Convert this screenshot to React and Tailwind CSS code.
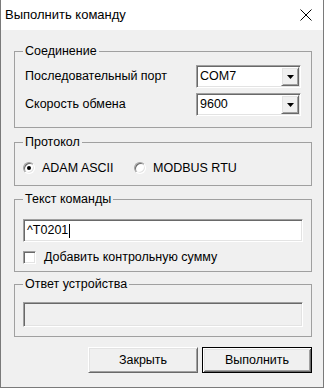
import { useState } from "react";

const sunken =
  "border border-t-[#a0a0a0] border-l-[#a0a0a0] border-r-white border-b-white shadow-[inset_1px_1px_0_#696969,inset_-1px_-1px_0_#e3e3e3]";

const raised =
  "border border-t-white border-l-white border-r-[#696969] border-b-[#696969] shadow-[inset_1px_1px_0_#e3e3e3,inset_-1px_-1px_0_#a0a0a0]";

const raisedDefault =
  "border border-black shadow-[inset_1px_1px_0_#ffffff,inset_-1px_-1px_0_#696969,inset_2px_2px_0_#e3e3e3,inset_-2px_-2px_0_#a0a0a0]";

function Group({ title, className, children }) {
  return (
    <fieldset className={`w-[298px] border border-[#a0a0a0] px-[8px] ${className}`}>
      <legend className="px-[2px] leading-[15px]">{title}</legend>
      {children}
    </fieldset>
  );
}

function Combo({ value }) {
  return (
    <div className={`flex h-[23px] w-[105px] bg-white p-[1px] ${sunken}`}>
      <div className="flex flex-1 items-center pl-[2px]">{value}</div>
      <div className={`flex w-[18px] items-center justify-center bg-[#f0f0f0] ${raised}`}>
        <svg width="7" height="4" viewBox="0 0 7 4">
          <polygon points="0,0 7,0 3.5,4" fill="#000" />
        </svg>
      </div>
    </div>
  );
}

function Radio({ checked, label, className }) {
  return (
    <div className={`flex items-center ${className}`}>
      <div className="flex h-[12px] w-[12px] items-center justify-center rounded-full border border-t-[#a0a0a0] border-l-[#a0a0a0] border-r-white border-b-white bg-white shadow-[inset_1px_1px_0_#696969,inset_-1px_-1px_0_#e3e3e3]">
        {checked && <div className="h-[4px] w-[4px] rounded-full bg-black" />}
      </div>
      <span className="ml-[7px]">{label}</span>
    </div>
  );
}

export default function App() {
  const [protocol, setProtocol] = useState("adam");

  return (
    <div className="h-[388px] w-[325px] bg-white font-['Liberation_Sans',Arial,sans-serif] text-[12.5px] text-black">
      <div className="flex h-[388px] w-[324px] flex-col border-x border-b border-[#7a7a7a]">
        {/* Title bar */}
        <div className="flex h-[30px] items-center justify-between bg-white pl-[4px] pr-[11px]">
          <span className="text-[13px]">Выполнить команду</span>
          <svg width="12" height="12" viewBox="0 0 12 12">
            <path d="M0.5 0.5 L11.5 11.5 M11.5 0.5 L0.5 11.5" stroke="#000" strokeWidth="1" />
          </svg>
        </div>

        {/* Body */}
        <div className="flex flex-1 flex-col bg-[#f0f0f0] pl-[13px] pt-[14px]">
          <Group title="Соединение" className="pb-[11px]">
            <div className="flex flex-col gap-[5px] pt-[6px]">
              <div className="flex items-center">
                <span className="w-[173px] pl-[2px]">Последовательный порт</span>
                <Combo value="COM7" />
              </div>
              <div className="flex items-center">
                <span className="w-[173px] pl-[2px]">Скорость обмена</span>
                <Combo value="9600" />
              </div>
            </div>
          </Group>

          <Group title="Протокол" className="mt-[7px] pb-[7px]">
            <div className="mt-[8px] flex h-[20px] items-center">
              <div className="w-[111px] cursor-default" onClick={() => setProtocol("adam")}>
                <Radio checked={protocol === "adam"} label="ADAM ASCII" />
              </div>
              <div className="cursor-default" onClick={() => setProtocol("modbus")}>
                <Radio checked={protocol === "modbus"} label="MODBUS RTU" />
              </div>
            </div>
          </Group>

          <Group title="Текст команды" className="mt-[6px] pb-[6px]">
            <div className={`mt-[12px] flex h-[23px] items-center bg-white pl-[3px] ${sunken}`}>
              <span>^T0201</span>
              <span className="ml-[1px] h-[14px] w-[1px] bg-black" />
            </div>
            <div className="mt-[7px] flex h-[16px] items-center">
              <div className={`h-[13px] w-[13px] bg-white ${sunken}`} />
              <span className="ml-[8px]">Добавить контрольную сумму</span>
            </div>
          </Group>

          <Group title="Ответ устройства" className="mt-[5px] pb-[9px]">
            <div className={`mt-[10px] h-[25px] bg-[#f0f0f0] ${sunken}`} />
          </Group>

          <div className="mt-[10px] flex w-[298px] justify-end gap-[4px]">
            <button className={`h-[26px] w-[110px] bg-[#f0f0f0] ${raised}`}>Закрыть</button>
            <button className={`h-[26px] w-[110px] bg-[#f0f0f0] ${raisedDefault}`}>Выполнить</button>
          </div>
        </div>
      </div>
    </div>
  );
}
